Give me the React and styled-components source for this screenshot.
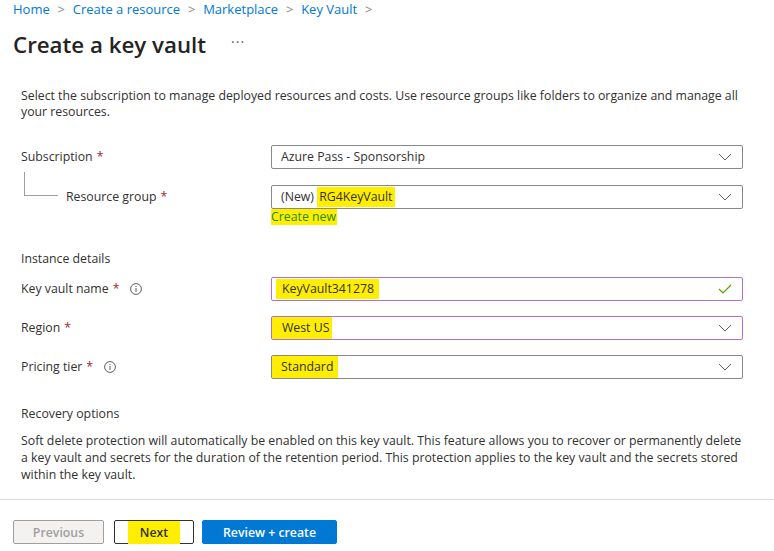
import styled, { createGlobalStyle } from "styled-components";

const GlobalStyle = createGlobalStyle`
  body {
    margin: 0;
    background: #ffffff;
    font-family: "Segoe UI", "Open Sans", "Liberation Sans", sans-serif;
    color: #323130;
  }
`;

const Page = styled.div`
  width: 774px;
  height: 551px;
  overflow: hidden;
  display: flex;
  flex-direction: column;
`;

const Header = styled.div`
  padding: 0 13px;
`;

const Crumbs = styled.nav`
  display: flex;
  align-items: center;
  height: 18px;
  font-size: 13px;
  line-height: 18px;
`;

const Crumb = styled.span`
  color: #0078d4;
`;

const Chevron = styled.span`
  display: inline-flex;
  width: 23px;
  justify-content: center;
  color: #8a8886;
`;

const TitleRow = styled.div`
  display: flex;
  align-items: center;
  margin-top: 10px;
  height: 32px;
`;

const Title = styled.h1`
  margin: 0;
  font-size: 22.3px;
  font-weight: 600;
  color: #252423;
`;

const More = styled.span`
  margin-left: 25px;
  font-size: 14px;
  color: #605e5c;
  letter-spacing: 1px;
  padding-bottom: 6px;
`;

const Form = styled.div`
  padding: 0 28px 0 21px;
  font-size: 12.3px;
  line-height: 16px;
`;

const Intro = styled.p`
  margin: 28px 0 0;
  line-height: 16px;
`;

const Row = styled.div`
  display: grid;
  grid-template-columns: 250px 472px;
  align-items: center;
  height: ${({ h }) => h || 24}px;
  margin-top: ${({ top }) => top}px;
`;

const Label = styled.div`
  display: flex;
  align-items: center;
  padding-left: ${({ indent }) => (indent ? 45 : 0)}px;
  position: relative;
`;

const Star = styled.span`
  color: #a4262c;
  margin-left: 4px;
`;

const Info = styled.span`
  display: inline-flex;
  margin-left: 11px;
  color: #605e5c;
`;

const Tree = styled.span`
  position: absolute;
  left: 3px;
  top: -17px;
  width: 33px;
  height: 23px;
  border-left: 1px solid #a19f9d;
  border-bottom: 1px solid #a19f9d;
`;

const Field = styled.div`
  height: 24px;
  box-sizing: border-box;
  border: 1px solid ${({ focus }) => (focus ? "#b36fd0" : "#8a8886")};
  border-radius: 2px;
  display: flex;
  align-items: center;
  justify-content: space-between;
  padding: 0 10px 0 ${({ inset }) => (inset === undefined ? 9 : inset)}px;
  background: #fff;
`;

const Value = styled.span`
  color: #323130;
  display: inline-flex;
  align-items: center;
`;

const Mark = styled.span`
  background: #ffee00;
  padding: ${({ pad }) => pad || "2px 2px"};
`;

const LinkText = styled.span`
  display: inline-block;
  background: #ffee00;
  color: #1f8a1f;
  padding: 0 1px 0 0;
  line-height: 16px;
`;

const Section = styled.div`
  margin-top: ${({ top }) => top}px;
`;

const Body = styled.p`
  margin: 10px 0 0;
  line-height: 17px;
`;

const Divider = styled.hr`
  border: none;
  border-top: 1px solid #e1dfdd;
  margin: 16px 0 0;
`;

const Footer = styled.div`
  display: flex;
  gap: 10px;
  padding: 20px 13px 0;
`;

const Button = styled.button`
  height: 24px;
  padding: 0;
  width: ${({ w }) => w}px;
  font-family: inherit;
  font-size: 12.3px;
  font-weight: 600;
  border-radius: 2px;
  box-sizing: border-box;
  ${({ kind }) =>
    kind === "primary"
      ? "background:#0078d4;border:1px solid #0078d4;color:#fff;margin-left:-2px;"
      : kind === "disabled"
      ? "background:#f3f2f1;border:1px solid #a19f9d;color:#a19f9d;"
      : "background:#fff;border:1px solid #323130;color:#323130;"}
`;

const ChevronDown = () => (
  <svg width="14" height="8" viewBox="0 0 14 8">
    <path d="M1 1l6 6 6-6" fill="none" stroke="#605e5c" strokeWidth="1" />
  </svg>
);

const Check = () => (
  <svg width="14" height="10" viewBox="0 0 14 10">
    <path d="M1 5l4 4 8-8" fill="none" stroke="#57a300" strokeWidth="1.2" />
  </svg>
);

const InfoIcon = () => (
  <svg width="12" height="12" viewBox="0 0 12 12">
    <circle cx="6" cy="6" r="5.4" fill="none" stroke="#605e5c" strokeWidth="1" />
    <path d="M6 5v4M6 3v1" stroke="#605e5c" strokeWidth="1" />
  </svg>
);

const crumbs = ["Home", "Create a resource", "Marketplace", "Key Vault"];

export default function App() {
  return (
    <Page>
      <GlobalStyle />
      <Header>
        <Crumbs>
          {crumbs.map((c) => (
            <span key={c}>
              <Crumb>{c}</Crumb>
              <Chevron>&gt;</Chevron>
            </span>
          ))}
        </Crumbs>
        <TitleRow>
          <Title>Create a key vault</Title>
          <More>···</More>
        </TitleRow>
      </Header>
      <Form>
        <Intro>
          Select the subscription to manage deployed resources and costs. Use
          resource groups like folders to organize and manage all your
          resources.
        </Intro>
        <Row top={25}>
          <Label>
            Subscription<Star>*</Star>
          </Label>
          <Field>
            <Value>Azure Pass - Sponsorship</Value>
            <ChevronDown />
          </Field>
        </Row>
        <Row top={16}>
          <Label indent>
            <Tree />
            Resource group<Star>*</Star>
          </Label>
          <Field>
            <Value>
              (New)&nbsp;<Mark>RG4KeyVault</Mark>
            </Value>
            <ChevronDown />
          </Field>
        </Row>
        <Row top={0} h={16}>
          <span />
          <div>
            <LinkText>Create new</LinkText>
          </div>
        </Row>
        <Section top={26}>Instance details</Section>
        <Row top={10}>
          <Label>
            Key vault name<Star>*</Star>
            <Info>
              <InfoIcon />
            </Info>
          </Label>
          <Field focus inset={4}>
            <Value>
              <Mark pad="2px 5px 2px 6px">KeyVault341278</Mark>
            </Value>
            <Check />
          </Field>
        </Row>
        <Row top={15}>
          <Label>
            Region<Star>*</Star>
          </Label>
          <Field focus inset={0}>
            <Value>
              <Mark pad="3px 3px 3px 10px">West US</Mark>
            </Value>
            <ChevronDown />
          </Field>
        </Row>
        <Row top={15}>
          <Label>
            Pricing tier<Star>*</Star>
            <Info>
              <InfoIcon />
            </Info>
          </Label>
          <Field inset={0}>
            <Value>
              <Mark pad="3px 5px 3px 9px">Standard</Mark>
            </Value>
            <ChevronDown />
          </Field>
        </Row>
        <Section top={27}>Recovery options</Section>
        <Body>
          Soft delete protection will automatically be enabled on this key
          vault. This feature allows you to recover or permanently delete a key
          vault and secrets for the duration of the retention period. This
          protection applies to the key vault and the secrets stored within the
          key vault.
        </Body>
      </Form>
      <Divider />
      <Footer>
        <Button kind="disabled" w={91}>
          Previous
        </Button>
        <Button w={80}>
          <Mark pad="3px 12px">Next</Mark>
        </Button>
        <Button kind="primary" w={135}>
          Review + create
        </Button>
      </Footer>
    </Page>
  );
}
